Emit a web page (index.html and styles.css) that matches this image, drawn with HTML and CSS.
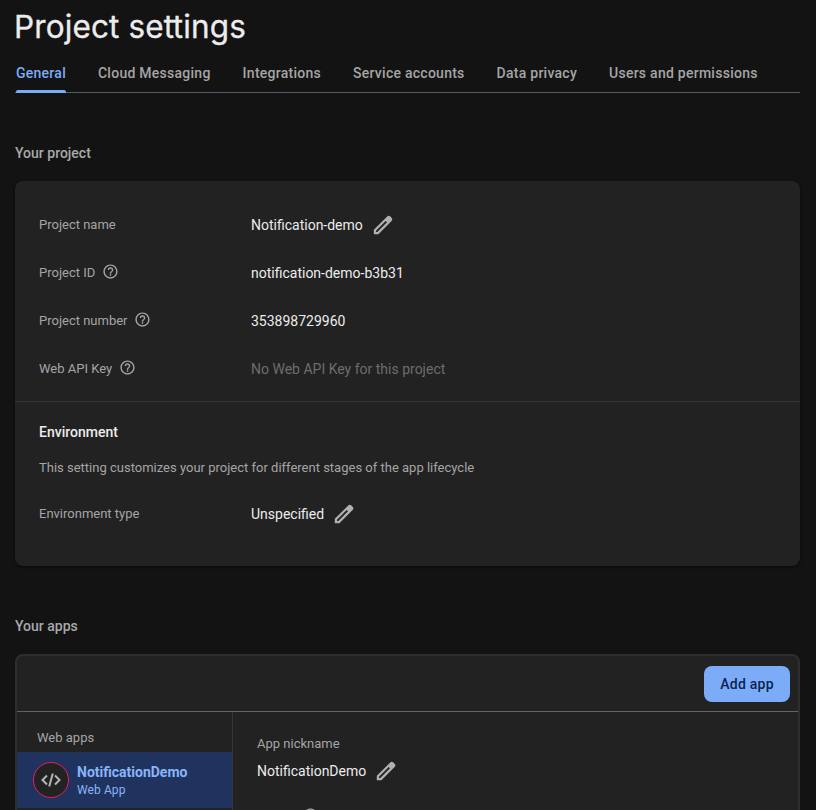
FILE: index.html
```html
<!DOCTYPE html>
<html lang="en">
<head>
<meta charset="utf-8">
<title>Project settings</title>
<link rel="stylesheet" href="styles.css">
</head>
<body>
<svg class="defs" aria-hidden="true">
  <symbol id="pencil" viewBox="0 0 24 24"><path fill-rule="evenodd" d="M2.800 16.700 16.200 3.600a2.300 2.300 0 0 1 3.200 0l1.200 1.200a2.300 2.300 0 0 1 0 3.200L7.400 21.200H2.800ZM5 17.700V19h1.300L16 9.300l-1.300-1.300Z"/></symbol>
  <symbol id="help" viewBox="0 0 24 24"><path d="M11 18h2v-2h-2v2zm1-16C6.480 2 2 6.480 2 12s4.480 10 10 10 10-4.480 10-10S17.520 2 12 2zm0 18c-4.410 0-8-3.590-8-8s3.590-8 8-8 8 3.590 8 8-3.590 8-8 8zm0-14c-2.210 0-4 1.790-4 4h2c0-1.100.9-2 2-2s2 .9 2 2c0 2-3 1.750-3 5h2c0-2.250 3-2.500 3-5 0-2.210-1.790-4-4-4z"/></symbol>
</svg>
<main class="page">
  <h1 class="title"><span>Project se</span><span class="tt">t</span><span>tings</span></h1>
  <nav class="tabs">
    <a class="tab active">General</a>
    <a class="tab">Cloud Messaging</a>
    <a class="tab">Integrations</a>
    <a class="tab">Service accounts</a>
    <a class="tab">Data privacy</a>
    <a class="tab">Users and permissions</a>
  </nav>

  <h2 class="heading">Your project</h2>
  <section class="card">
    <div class="details">
      <div class="row"><span class="label">Project name</span><span class="value">Notification-demo</span><svg class="edit"><use href="#pencil"/></svg></div>
      <div class="row"><span class="label">Project ID<svg class="help"><use href="#help"/></svg></span><span class="value">notification-demo-b3b31</span></div>
      <div class="row"><span class="label">Project number<svg class="help"><use href="#help"/></svg></span><span class="value">353898729960</span></div>
      <div class="row"><span class="label">Web API Key<svg class="help"><use href="#help"/></svg></span><span class="value muted">No Web API Key for this project</span></div>
    </div>
    <div class="environment">
      <h3 class="subheading">Environment</h3>
      <p class="description">This setting customizes your project for different stages of the app lifecycle</p>
      <div class="row"><span class="label">Environment type</span><span class="value">Unspecified</span><svg class="edit"><use href="#pencil"/></svg></div>
    </div>
  </section>

  <h2 class="heading">Your apps</h2>
  <section class="apps">
    <header class="toolbar"><button class="add">Add app</button></header>
    <div class="columns">
      <aside class="side">
        <div class="group">Web apps</div>
        <div class="app">
          <span class="badge"><svg class="code" viewBox="0 0 20 14"><path d="M6 2.500 1.500 7 6 11.500M14 2.500 18.500 7 14 11.500M11.800.5 8.200 13.500"/></svg></span>
          <span class="names"><span class="name">NotificationDemo</span><span class="kind">Web App</span></span>
        </div>
      </aside>
      <div class="info">
        <div class="label">App nickname</div>
        <div class="nickname"><span class="value">NotificationDemo</span><svg class="edit"><use href="#pencil"/></svg></div>
        <div class="next"><svg class="help"><use href="#help"/></svg></div>
      </div>
    </div>
  </section>
</main>
</body>
</html>
```
FILE: styles.css
```css
* { box-sizing: border-box; }
html, body { height: 810px; overflow: hidden; }
body { margin: 0; background: #131313; color: #ececec; font-family: Roboto, "Liberation Sans", sans-serif; }
.defs { display: none; }
svg { fill: currentColor; flex: none; }
.page { height: 810px; overflow: hidden; padding: 0 16px 0 15px; }
.title { margin: 0 0 0 -1px; height: 54px; font: 400 31.500px/54px Inter, sans-serif; letter-spacing: .12px; -webkit-text-stroke: .3px #ececec; white-space: nowrap; }
.tt { letter-spacing: -1.200px; }
.tabs { display: flex; gap: 32px; height: 39px; padding-left: 1px; border-bottom: 1px solid #535b68; }
.tab { display: flex; flex-direction: column; justify-content: space-between; height: 39px; font-size: 14px; font-weight: 500; line-height: 36px; letter-spacing: .26px; padding-top: 1px; color: #a5a5a5; white-space: nowrap; }
.tab.active { color: #7cacf8; }
.tab.active::after { content: ""; flex: none; height: 3px; margin-top: -1px; border-radius: 2px 2px 0 0; background: #7cacf8; }
.heading { margin: 50px 0 18px; font-size: 14px; font-weight: 500; line-height: 20px; color: #a9a9a9; }
.card { height: 385px; border-radius: 8px; background: #222; box-shadow: 0 1px 3px #080808; }
.details { height: 221px; padding: 20px 24px 0; border-bottom: 1px solid #363636; }
.row { display: flex; align-items: center; height: 48px; }
.row .label { width: 212px; padding-bottom: 2px; }
.label { display: flex; align-items: center; font-size: 13px; color: #a5a5a5; }
.value { font-size: 14px; }
.muted { color: #6d6d6d; }
.edit { width: 24px; height: 24px; margin-left: 8px; color: #b0b0b0; }
.help { width: 17px; height: 17px; margin: -1px 0 0 6.500px; }
.environment { padding: 19px 24px 0; }
.subheading { margin: 0; font-size: 14px; font-weight: 500; line-height: 22px; }
.description { margin: 14px 0 11px; font-size: 13px; line-height: 22px; color: #a5a5a5; }
.apps { height: 260px; border: 2px solid #2e2e2e; border-radius: 8px; background: #222; }
.toolbar { display: flex; justify-content: flex-end; padding: 10px 8px 9px; height: 56px; border-bottom: 1px solid #62646c; }
.add { width: 86px; height: 36px; border: 0; border-radius: 8px; background: #7cacf8; color: #0c2350; font: 500 14px Roboto, sans-serif; letter-spacing: .25px; }
.columns { display: flex; height: 200px; }
.side { width: 216px; border-right: 1px solid #363636; }
.group { height: 40px; padding: 16px 20px 0; font-size: 13px; line-height: 20px; color: #a5a5a5; }
.app { display: flex; align-items: center; gap: 8px; height: 56px; padding-left: 16px; background: #20335f; color: #8ab4f8; }
.badge { display: grid; place-items: center; width: 36px; height: 36px; border: 1px solid #e91e63; border-radius: 50%; background: #222; }
.code { width: 20px; height: 14px; fill: none; stroke: #b5b5b5; stroke-width: 2; }
.names { display: flex; flex-direction: column; }
.name { font-size: 14px; font-weight: 700; line-height: 20px; }
.kind { font-size: 12px; line-height: 16px; letter-spacing: .1px; }
.info { padding: 21px 24px; }
.info > .label { height: 20px; }
.nickname { display: flex; align-items: center; height: 36px; }
.next { margin: 19px 0 0 38px; color: #a5a5a5; }
```
